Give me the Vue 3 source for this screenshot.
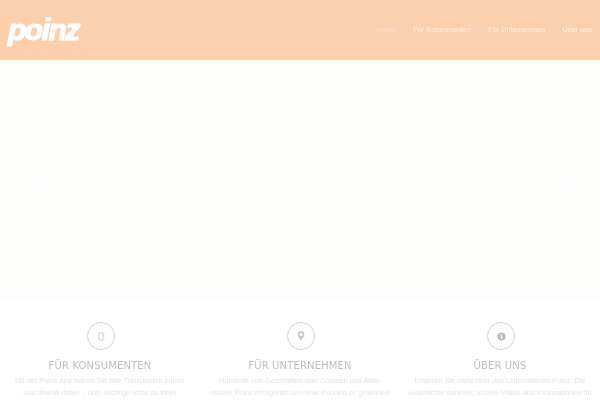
<script setup>
const navItems = [
  { label: 'Home', active: true },
  { label: 'Für Konsumenten' },
  { label: 'Für Unternehmen' },
  { label: 'Über uns' }
]
const features = [
  { id: 'phone', title: 'FÜR KONSUMENTEN', lines: ['Mit der Poinz App haben Sie Ihre Treuekarten immer', 'und überall dabei  - und  wichtige Infos zu Ihren'] },
  { id: 'pin', title: 'FÜR UNTERNEHMEN', lines: ['Hunderte von Geschäften aller Grössen und Arten', 'nutzen Poinz erfolgreich um neue Kunden zu gewinnen'] },
  { id: 'info', title: 'ÜBER UNS', lines: ['Erfahren Sie mehr über das Unternehmen Poinz: Die', 'Geschichte dahinter, unsere Vision und Informationen für'] }
]
</script>

<template>
  <div class="page">
    <header class="header">
      <span class="logo">poinz</span>
      <nav class="nav">
        <a v-for="item in navItems" :key="item.label" class="nav-link" :class="{ active: item.active }">{{ item.label }}</a>
      </nav>
    </header>
    <section class="hero">
      <svg class="arrow" width="12" height="18" viewBox="0 0 12 18"><path d="M9 3 3 9l6 6" fill="none" stroke="#ffffff" stroke-width="2" /></svg>
      <svg class="arrow" width="12" height="18" viewBox="0 0 12 18"><path d="M3 3l6 6-6 6" fill="none" stroke="#ffffff" stroke-width="2" /></svg>
    </section>
    <section class="features">
      <article v-for="f in features" :key="f.id" class="feature">
        <div class="icon-ring">
          <svg v-if="f.id === 'phone'" width="6" height="9" viewBox="0 0 6 9"><rect x="1" y=".8" width="4" height="7.400" rx=".6" fill="none" stroke="#c8cbce" stroke-width="1" /></svg>
          <svg v-else-if="f.id === 'pin'" width="8" height="10" viewBox="0 0 8 10"><path fill-rule="evenodd" d="M4 .3a3.300 3.300 0 0 0-3.300 3.300C.7 5.700 4 9.700 4 9.700s3.300-4 3.300-6.100A3.300 3.300 0 0 0 4 .3Zm0 1.700a1.600 1.600 0 1 1 0 3.200 1.600 1.600 0 0 1 0-3.200Z" fill="#c4c7ca" /></svg>
          <svg v-else width="9" height="9" viewBox="0 0 9 9"><circle cx="4.500" cy="4.500" r="4.100" fill="#b8bcbf" /><rect x="3.800" y="3.800" width="1.400" height="3.100" fill="#fff" /><rect x="3.800" y="2" width="1.400" height="1.200" fill="#fff" /></svg>
        </div>
        <h2 class="title">{{ f.title }}</h2>
        <p class="text"><span v-for="line in f.lines" :key="line" class="line">{{ line }}</span></p>
      </article>
    </section>
  </div>
</template>

<style>
html, body { margin: 0; background: #fff; overflow: hidden; }
</style>

<style scoped>
.page { width: 600px; height: 400px; overflow: hidden; display: flex; flex-direction: column; }
.header { height: 60px; flex: none; background: #fdd0ad; display: flex; align-items: center; justify-content: space-between; padding: 0 8px; box-sizing: border-box; }
.logo { font: italic 700 30px/1 "Liberation Sans", sans-serif; color: #fff; letter-spacing: -1.5px; -webkit-text-stroke: 1.2px #fff; filter: blur(.4px); }
.nav { display: flex; gap: 17px; filter: blur(.4px); }
.nav-link { font: 7.300px/1 "Liberation Sans", sans-serif; color: #ffffff; opacity: .72; }
.nav-link.active { opacity: .42; }
.hero { height: 240px; flex: none; background: #fffdfb; display: flex; align-items: center; justify-content: space-between; padding: 0 32px; box-sizing: border-box; }
.features { display: grid; grid-template-columns: repeat(3, 200px); filter: blur(.4px); }
.feature { display: flex; flex-direction: column; align-items: center; padding-top: 22px; }
.icon-ring { width: 26px; height: 26px; margin-left: 2px; border: 1px solid #cfd1d3; border-radius: 50%; display: flex; align-items: center; justify-content: center; }
.title { margin: 8px 0 0; font: 400 10px/15px "DejaVu Sans", sans-serif; letter-spacing: 0.15px; color: #bcc0c3; }
.text { margin: 2px 0 0; font: 400 7.300px/12px "Liberation Sans", sans-serif; color: #e2e4e6; text-align: center; }
.line { display: block; white-space: pre; }
</style>
